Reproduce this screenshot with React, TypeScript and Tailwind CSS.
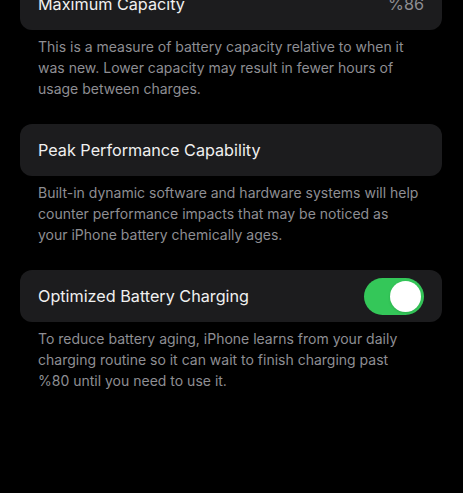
import React from "react";

function Card({ title, right }: { title: string; right?: React.ReactNode }) {
  return (
    <div className="flex h-[52px] items-center justify-between rounded-[12px] bg-[#1c1c1e] pl-[18px] pr-[18px]">
      <span className="text-[16.2px] leading-none text-[#f0f0f0]">{title}</span>
      {right}
    </div>
  );
}

function Footer({ children }: { children: React.ReactNode }) {
  return (
    <p className="mt-[6px] pl-[18px] pr-[21px] text-[14px] leading-[21px] text-[#8e8e93]">{children}</p>
  );
}

export default function App() {
  return (
    <div
      className="h-[493px] w-[463px] overflow-hidden bg-black"
      style={{ fontFamily: "Inter, 'Noto Sans', sans-serif" }}
    >
      <div className="-mt-[22px] pl-[20px] pr-[21px]">
        <Card title="Maximum Capacity" right={<span className="text-[16.2px] leading-none text-[#8e8e93]">%86</span>} />
        <Footer>
          This is a measure of battery capacity relative to when it was new. Lower capacity may result in fewer hours of usage between charges.
        </Footer>
        <div className="h-[25px]" />
        <Card title="Peak Performance Capability" />
        <Footer>
          Built-in dynamic software and hardware systems will help counter performance impacts that may be noticed as your iPhone battery chemically ages.
        </Footer>
        <div className="h-[25px]" />
        <Card
          title="Optimized Battery Charging"
          right={
            <div className="flex h-[37px] w-[60px] items-center justify-end rounded-full bg-[#34c759] p-[3px]">
              <div className="h-[31px] w-[31px] rounded-full bg-white shadow" />
            </div>
          }
        />
        <Footer>
          To reduce battery aging, iPhone learns from your daily charging routine so it can wait to finish charging past %80 until you need to use it.
        </Footer>
      </div>
    </div>
  );
}
